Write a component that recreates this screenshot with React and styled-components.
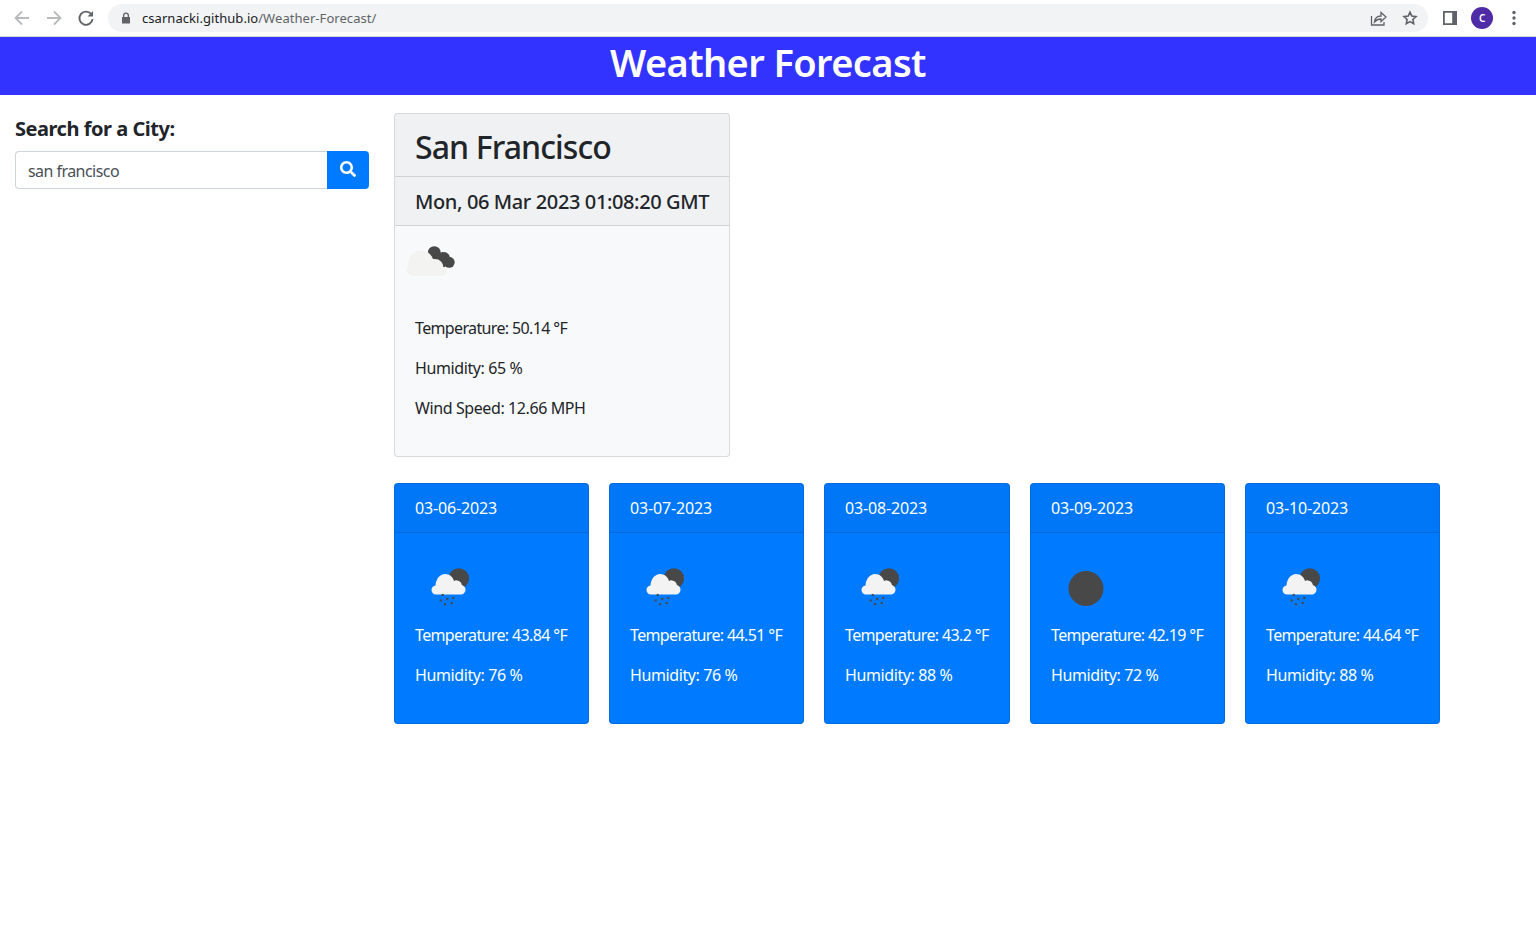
import React from 'react';
import styled, { createGlobalStyle } from 'styled-components';
import { FaSearch } from 'react-icons/fa';

const GlobalStyle = createGlobalStyle`
  html, body { margin: 0; padding: 0; background: #fff; }
  body {
    font-family: "Noto Sans", "Open Sans", sans-serif;
    font-size: 16px;
    line-height: 24px;
    color: #212529;
    letter-spacing: -0.35px;
  }
  * { box-sizing: border-box; }
`;

const Chrome = styled.div`
  height: 37px;
  display: flex;
  align-items: center;
  background: #fff;
  border-bottom: 1px solid #d5d6d8;
  padding: 0 12px 1px 12px;
`;

const NavButton = styled.div`
  width: 20px;
  height: 20px;
  margin-right: 12px;
  display: flex;
  color: ${p => (p.$off ? '#b9babc' : '#5f6368')};
`;

const Omnibox = styled.div`
  flex: 1;
  height: 28px;
  padding: 0 8px 0 12px;
  border-radius: 14px;
  background: #f1f3f4;
  display: flex;
  align-items: center;
  font-size: 13px;
  letter-spacing: 0.05px;
  color: #5f6368;
`;

const Lock = styled.svg`
  width: 12px;
  height: 12px;
  margin-right: 10px;
  fill: #5f6368;
`;

const Host = styled.span`
  color: #202124;
`;

const OmniActions = styled.div`
  margin-left: auto;
  display: flex;
  gap: 12px;
  color: #5f6368;
`;

const ChromeIcon = styled.svg`
  width: 20px;
  height: 20px;
  display: block;
`;

const ChromeRight = styled.div`
  display: flex;
  align-items: center;
  margin-left: 12px;
  color: #5f6368;
`;

const Avatar = styled.div`
  width: 22px;
  height: 22px;
  margin: 0 11px 0 11px;
  border-radius: 50%;
  background: #4f2ba6;
  color: #fff;
  font-size: 10px;
  font-weight: 600;
  line-height: 22px;
  text-align: center;
`;

const Banner = styled.header`
  height: 58px;
  background: #3333ff;
  color: #fff;
  text-align: center;
`;

const BannerTitle = styled.h1`
  margin: 0;
  font-size: 38px;
  font-weight: 600;
  line-height: 50px;
  letter-spacing: -0.6px;
`;

const Page = styled.main`
  display: flex;
  padding-top: 18px;
`;

const Sidebar = styled.aside`
  width: 384px;
  padding: 0 15px;
`;

const SearchLabel = styled.h5`
  margin: 4px 0 10px;
  font-size: 20px;
  line-height: 24px;
  font-weight: 700;
  letter-spacing: -0.47px;
`;

const SearchRow = styled.div`
  display: flex;
  height: 38px;
`;

const SearchInput = styled.input`
  flex: 1;
  min-width: 0;
  padding: 2px 12px 0;
  border: 1px solid #ced4da;
  border-right: 0;
  border-radius: 4px 0 0 4px;
  font: inherit;
  letter-spacing: -0.55px;
  color: #495057;
  outline: 0;
`;

const SearchButton = styled.button`
  width: 42px;
  border: 0;
  border-radius: 0 4px 4px 0;
  background: #007bff;
  color: #fff;
  font-size: 16px;
  display: flex;
  align-items: center;
  justify-content: center;
  padding: 0 0 3px;
`;

const Results = styled.section`
  padding-left: 10px;
`;

const CurrentCard = styled.article`
  width: 336px;
  height: 344px;
  background: #f8f9fa;
  border: 1px solid rgba(0, 0, 0, 0.125);
  border-radius: 4px;
`;

const CardHead = styled.div`
  padding: 12px 20px;
  background: rgba(0, 0, 0, 0.03);
  border-bottom: 1px solid rgba(0, 0, 0, 0.125);
  letter-spacing: -0.15px;
`;

const CityName = styled.h2`
  margin: 0;
  font-size: 32px;
  line-height: 38px;
  font-weight: 500;
  letter-spacing: -0.9px;
  padding-top: 2px;
  height: 38px;
`;

const DateLine = styled.h5`
  margin: 0;
  font-size: 20px;
  line-height: 24px;
  font-weight: 500;
  letter-spacing: -0.38px;
  padding-top: 1px;
  height: 24px;
  white-space: nowrap;
`;

const CardBody = styled.div`
  padding: 0 20px 20px;
`;

const Stat = styled.p`
  margin: 0 0 16px;
  letter-spacing: ${p => (p.$tight ? '-0.64px' : '-0.4px')};
`;

const Icon = styled.svg`
  width: 50px;
  height: 50px;
  display: block;
  margin: ${p => (p.$main ? '10px 0 30px -10px' : '30px 0 10px 10px')};
`;

const ForecastRow = styled.div`
  display: flex;
  gap: 20px;
  margin-top: 26px;
`;

const ForecastCard = styled.article`
  width: ${p => p.$width}px;
  height: 241px;
  background: #007bff;
  color: #fff;
  border: 1px solid rgba(0, 0, 0, 0.125);
  border-radius: 4px;
  white-space: nowrap;
`;

const Share = () => (
  <ChromeIcon viewBox="0 0 20 20" fill="none" stroke="currentColor" strokeWidth="1.3">
    <path d="M3.500 8v9h12.500v-3" />
    <path d="M6.500 14c.5-4 3-6 6.500-6V4.500l5 4.500-5 4.500V11c-2.800 0-4.800 1-6.500 3z" />
  </ChromeIcon>
);

const Star = () => (
  <ChromeIcon viewBox="0 0 20 20" fill="none" stroke="currentColor" strokeWidth="1.6">
    <path d="M10 4.200l1.800 3.900 4.200.5-3.100 2.900.8 4.200-3.700-2.100-3.700 2.100.8-4.200-3.100-2.900 4.200-.5z" />
  </ChromeIcon>
);

const BackArrow = () => (
  <ChromeIcon viewBox="0 0 20 20" fill="none" stroke="currentColor" strokeWidth="1.8">
    <path d="M17 10H4M10 3.500L3.500 10l6.500 6.500" />
  </ChromeIcon>
);

const ForwardArrow = () => (
  <ChromeIcon viewBox="0 0 20 20" fill="none" stroke="currentColor" strokeWidth="1.8">
    <path d="M3 10h13M10 3.500l6.500 6.500-6.500 6.500" />
  </ChromeIcon>
);

const Reload = () => (
  <ChromeIcon viewBox="0 0 20 20" fill="none">
    <path d="M15.300 6.200A6.600 6.600 0 1 0 16.600 11" stroke="currentColor" strokeWidth="1.900" />
    <path d="M17 3v5.500h-5.500z" fill="currentColor" />
  </ChromeIcon>
);

const SidePanel = () => (
  <ChromeIcon viewBox="0 0 20 20">
    <path fillRule="evenodd" d="M3 3h14v14H3zM4.800 4.800v10.400h7.400V4.800z" fill="currentColor" />
  </ChromeIcon>
);

const Kebab = () => (
  <ChromeIcon viewBox="0 0 20 20" fill="currentColor">
    <circle cx="10" cy="4.500" r="1.700" />
    <circle cx="10" cy="10" r="1.700" />
    <circle cx="10" cy="15.500" r="1.700" />
  </ChromeIcon>
);

const RainCloud = () => (
  <Icon viewBox="0 0 50 50">
    <circle cx="33.800" cy="15.500" r="10.300" fill="#484848" />
    <path
      d="M11 31.500c-2.500 0-4.500-2-4.500-4.500 0-2.400 1.700-4.200 4-4.500C10.800 16 15 11 20 11c4.500 0 8 2.800 9 7 1-.6 1.900-.7 3-.6 2.800.2 4.700 2.200 4.900 4.700 2 .6 3.600 2.300 3.600 4.400 0 2.700-2 5-4.500 5z"
      fill="#f3f3f3"
    />
    <path
      d="M18 31l-.6 2M28.600 34l-.6 2M22.600 35l-.6 2M16 36.500l-.6 2M27 39l-.6 2M20.300 40.300l-.6 2"
      fill="none"
      stroke="#484848"
      strokeWidth="2.200"
    />
  </Icon>
);

const ClearNight = () => (
  <Icon viewBox="0 0 50 50">
    <circle cx="25" cy="25.500" r="17.500" fill="#484848" />
  </Icon>
);

const BrokenClouds = () => (
  <Icon $main viewBox="0 0 50 50">
    <g fill="#484848">
      <circle cx="29.300" cy="16.700" r="6.500" />
      <circle cx="39" cy="21.800" r="5.800" />
      <circle cx="44.200" cy="26.300" r="5.500" />
      <path d="M26 20l12-4 6 12-6 4z" />
    </g>
    <g fill="#f3f3f1">
      <circle cx="16" cy="27.300" r="12.700" />
      <circle cx="8.300" cy="33.300" r="6.700" />
      <circle cx="30" cy="31.500" r="8.500" />
      <circle cx="37" cy="35.500" r="4.500" />
      <path d="M8.300 32h28.700v8H8.300z" />
    </g>
  </Icon>
);

const days = [
  { date: '03-06-2023', temp: '43.84', humidity: 76, width: 195, Art: RainCloud },
  { date: '03-07-2023', temp: '44.51', humidity: 76, width: 195, Art: RainCloud },
  { date: '03-08-2023', temp: '43.2', humidity: 88, width: 186, Art: RainCloud },
  { date: '03-09-2023', temp: '42.19', humidity: 72, width: 195, Art: ClearNight },
  { date: '03-10-2023', temp: '44.64', humidity: 88, width: 195, Art: RainCloud },
];

export default function App() {
  return (
    <>
      <GlobalStyle />
      <Chrome>
        <NavButton $off><BackArrow /></NavButton>
        <NavButton $off><ForwardArrow /></NavButton>
        <NavButton><Reload /></NavButton>
        <Omnibox>
          <Lock viewBox="0 0 12 12">
            <path d="M2 5h1V3.500a3 3 0 0 1 6 0V5h1v6.500H2zM4.300 5h3.400V3.500a1.700 1.700 0 0 0-3.400 0z" />
          </Lock>
          <Host>csarnacki.github.io</Host>/Weather-Forecast/
          <OmniActions>
            <Share />
            <Star />
          </OmniActions>
        </Omnibox>
        <ChromeRight>
          <SidePanel />
          <Avatar>C</Avatar>
          <Kebab />
        </ChromeRight>
      </Chrome>
      <Banner>
        <BannerTitle>Weather Forecast</BannerTitle>
      </Banner>
      <Page>
        <Sidebar>
          <SearchLabel>Search for a City:</SearchLabel>
          <SearchRow>
            <SearchInput defaultValue="san francisco" />
            <SearchButton aria-label="Search"><FaSearch /></SearchButton>
          </SearchRow>
        </Sidebar>
        <Results>
          <CurrentCard>
            <CardHead><CityName>San Francisco</CityName></CardHead>
            <CardHead><DateLine>Mon, 06 Mar 2023 01:08:20 GMT</DateLine></CardHead>
            <CardBody>
              <BrokenClouds />
              <Stat $tight>Temperature: 50.14 °F</Stat>
              <Stat>Humidity: 65 %</Stat>
              <Stat>Wind Speed: 12.66 MPH</Stat>
            </CardBody>
          </CurrentCard>
          <ForecastRow>
            {days.map(({ date, temp, humidity, width, Art }) => (
              <ForecastCard key={date} $width={width}>
                <CardHead>{date}</CardHead>
                <CardBody>
                  <Art />
                  <Stat $tight>Temperature: {temp} °F</Stat>
                  <Stat>Humidity: {humidity} %</Stat>
                </CardBody>
              </ForecastCard>
            ))}
          </ForecastRow>
        </Results>
      </Page>
    </>
  );
}
